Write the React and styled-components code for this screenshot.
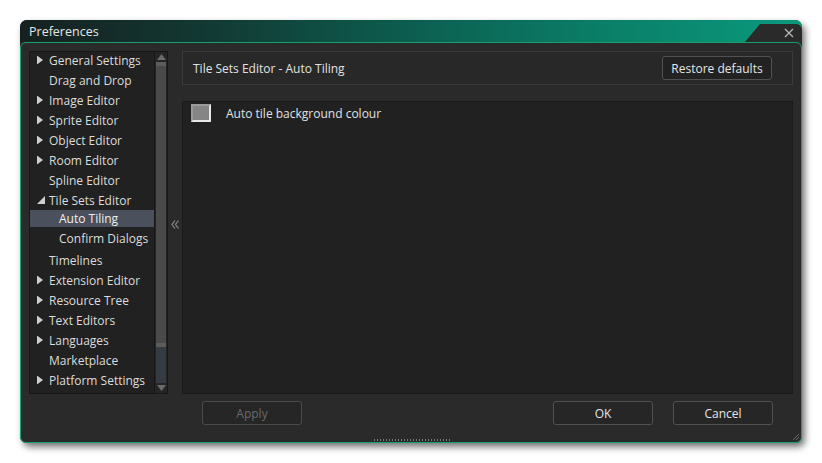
import React from 'react';
import styled, { createGlobalStyle } from 'styled-components';

const Global = createGlobalStyle`
  html, body { margin: 0; padding: 0; background: #ffffff; }
  body { font-family: "Open Sans", "Noto Sans", sans-serif; }
  #root { width: 822px; height: 463px; }
`;

const Page = styled.div`
  padding: 20px 0 0 20px;
`;

const Window = styled.div`
  width: 782px;
  height: 423px;
  display: flex;
  flex-direction: column;
  border-radius: 7px;
  box-shadow: 3px 4px 7px rgba(0, 0, 0, 0.55);
  background: #2a2a2a;
`;

const TitleBar = styled.div`
  height: 22px;
  display: flex;
  align-items: center;
  border-radius: 7px 7px 0 0;
  background: linear-gradient(90deg, #162020 0%, #123a34 25%, #0c5e50 50%, #0a7f68 75%, #0a9a7c 100%);
`;

const Title = styled.div`
  padding-left: 9px;
  font-size: 12.5px;
  color: #e6e6e6;
`;

const CloseTab = styled.div`
  margin-left: auto;
  align-self: flex-end;
  width: 57px;
  height: 18px;
  background: #2a2a2a;
  clip-path: polygon(15px 0, 100% 0, 100% 100%, 0 100%);
  border-top-right-radius: 6px;
  display: flex;
  align-items: center;
  justify-content: flex-end;
  padding-right: 8px;
  box-sizing: border-box;
`;

const Body = styled.div`
  flex: 1;
  position: relative;
  border: 1px solid #17a06e;
  border-radius: 6px;
  background: #2a2a2a;
  display: flex;
  flex-direction: column;
  padding: 8px 8px 0 8px;
`;

const Main = styled.div`
  display: flex;
  height: 343px;
`;

const Tree = styled.div`
  width: 139px;
  display: flex;
  background: #212121;
  border: 1px solid #171717;
  box-sizing: border-box;
  overflow: hidden;
`;

const Items = styled.div`
  flex: 1;
  margin-top: -2px;
`;

const Row = styled.div`
  height: ${p => (p.$child ? 17 : 20)}px;
  margin-bottom: ${p => (p.$child ? 3 : 0)}px;
  display: flex;
  align-items: center;
  padding-left: ${p => (p.$child ? 29 : 19)}px;
  position: relative;
  font-size: 12px;
  color: ${p => (p.$selected ? '#f0f0f0' : '#dcdcdc')};
  background: ${p => (p.$selected ? '#4a505c' : 'transparent')};
  white-space: nowrap;
`;

const Arrow = styled.span`
  position: absolute;
  left: 7px;
  top: 50%;
  transform: translateY(-50%);
  display: flex;
`;

const Scrollbar = styled.div`
  width: 12px;
  display: flex;
  flex-direction: column;
  align-items: center;
  border-left: 1px solid #171717;
  background: #252525;
`;

const ScrollArrow = styled.div`
  height: 10px;
  display: flex;
  align-items: center;
  justify-content: center;
`;

const Track = styled.div`
  flex: 1;
  width: 10px;
  display: flex;
  flex-direction: column;
  background: #343b42;
`;

const Thumb = styled.div`
  height: 285px;
  background: #4a4a4a;
  border-top: 4px solid #5c5c5c;
  border-bottom: 4px solid #5c5c5c;
  box-sizing: border-box;
`;

const Collapse = styled.div`
  width: 14px;
  display: flex;
  align-items: center;
  justify-content: center;
  padding-top: 4px;
`;

const Right = styled.div`
  flex: 1;
  display: flex;
  flex-direction: column;
  gap: 16px;
`;

const Header = styled.div`
  height: 34px;
  border: 1px solid #3b3b3b;
  background: #282828;
  display: flex;
  align-items: center;
  justify-content: space-between;
  padding: 0 20px 0 10px;
  box-sizing: border-box;
  font-size: 12px;
  color: #e2e2e2;
`;

const Button = styled.button`
  width: ${p => p.$w || 100}px;
  height: 24px;
  font-family: "Open Sans", "Noto Sans", sans-serif;
  font-size: 12px;
  color: ${p => (p.disabled ? '#6a6a6a' : '#e6e6e6')};
  background: ${p => (p.$dark ? '#222222' : '#262626')};
  border: 1px solid ${p => (p.disabled ? '#4a4a4a' : '#515151')};
  border-radius: 3px;
  padding: 0;
`;

const Content = styled.div`
  flex: 1;
  background: #212121;
  border: 1px solid #1a1a1a;
  padding: 2px 8px;
`;

const CheckRow = styled.div`
  display: flex;
  align-items: center;
  gap: 15px;
  font-size: 12px;
  color: #e2e2e2;
`;

const Check = styled.div`
  width: 20px;
  height: 18px;
  box-sizing: border-box;
  background: #858585;
  border-top: 2px solid #9a9a9a;
  border-left: 2px solid #9a9a9a;
  border-right: 2px solid #e8e8e8;
  border-bottom: 2px solid #e8e8e8;
`;

const Footer = styled.div`
  display: flex;
  align-items: center;
  padding: 7px 20px 0 20px;
  margin-left: 153px;
  gap: 20px;
`;

const Spacer = styled.div`
  flex: 1;
`;

const Grip = styled.div`
  position: absolute;
  bottom: 1px;
  left: 352px;
  width: 78px;
  height: 2px;
  background-image: radial-gradient(circle, #777 0.8px, transparent 1px);
  background-size: 3px 2px;
`;

const Corner = styled.svg`
  position: absolute;
  right: 1px;
  bottom: 1px;
`;

const RightTri = () => (
  <svg width="6" height="9" viewBox="0 0 6 9"><path d="M0 0 L6 4.5 L0 9 Z" fill="#cfcfcf" /></svg>
);
const DownTri = () => (
  <svg width="8" height="8" viewBox="0 0 8 8"><path d="M8 0 L8 8 L0 8 Z" fill="#cfcfcf" /></svg>
);

const items = [
  { label: 'General Settings', arrow: 'r' },
  { label: 'Drag and Drop' },
  { label: 'Image Editor', arrow: 'r' },
  { label: 'Sprite Editor', arrow: 'r' },
  { label: 'Object Editor', arrow: 'r' },
  { label: 'Room Editor', arrow: 'r' },
  { label: 'Spline Editor' },
  { label: 'Tile Sets Editor', arrow: 'd' },
  { label: 'Auto Tiling', child: true, selected: true },
  { label: 'Confirm Dialogs', child: true },
  { label: 'Timelines' },
  { label: 'Extension Editor', arrow: 'r' },
  { label: 'Resource Tree', arrow: 'r' },
  { label: 'Text Editors', arrow: 'r' },
  { label: 'Languages', arrow: 'r' },
  { label: 'Marketplace' },
  { label: 'Platform Settings', arrow: 'r' },
];

export default function App() {
  return (
    <Page>
      <Global />
      <Window>
        <TitleBar>
          <Title>Preferences</Title>
          <CloseTab>
            <svg width="10" height="10" viewBox="0 0 10 10">
              <path d="M1 1 L9 9 M9 1 L1 9" stroke="#b8b8b8" strokeWidth="1.3" />
            </svg>
          </CloseTab>
        </TitleBar>
        <Body>
          <Main>
            <Tree>
              <Items>
                {items.map(it => (
                  <Row key={it.label} $child={it.child} $selected={it.selected}>
                    {it.arrow && <Arrow>{it.arrow === 'r' ? <RightTri /> : <DownTri />}</Arrow>}
                    {it.label}
                  </Row>
                ))}
              </Items>
              <Scrollbar>
                <ScrollArrow>
                  <svg width="9" height="6" viewBox="0 0 9 6"><path d="M0 6 L4.5 0 L9 6 Z" fill="#6a6a6a" /></svg>
                </ScrollArrow>
                <Track>
                  <Thumb />
                </Track>
                <ScrollArrow>
                  <svg width="9" height="6" viewBox="0 0 9 6"><path d="M0 0 L9 0 L4.5 6 Z" fill="#6a6a6a" /></svg>
                </ScrollArrow>
              </Scrollbar>
            </Tree>
            <Collapse>
              <svg width="8" height="9" viewBox="0 0 8 9">
                <path d="M4 0.5 L1 4.5 L4 8.5 M7.5 0.5 L4.5 4.5 L7.5 8.5" stroke="#8a8a8a" strokeWidth="1.2" fill="none" />
              </svg>
            </Collapse>
            <Right>
              <Header>
                <span>Tile Sets Editor - Auto Tiling</span>
                <Button $w={110} $dark>Restore defaults</Button>
              </Header>
              <Content>
                <CheckRow>
                  <Check />
                  <span>Auto tile background colour</span>
                </CheckRow>
              </Content>
            </Right>
          </Main>
          <Footer>
            <Button disabled>Apply</Button>
            <Spacer />
            <Button>OK</Button>
            <Button>Cancel</Button>
          </Footer>
          <Grip />
          <Corner width="8" height="8" viewBox="0 0 8 8">
            <path d="M7 1 L1 7 M7 4 L4 7" stroke="#6a6a6a" strokeWidth="1" />
          </Corner>
        </Body>
      </Window>
    </Page>
  );
}
